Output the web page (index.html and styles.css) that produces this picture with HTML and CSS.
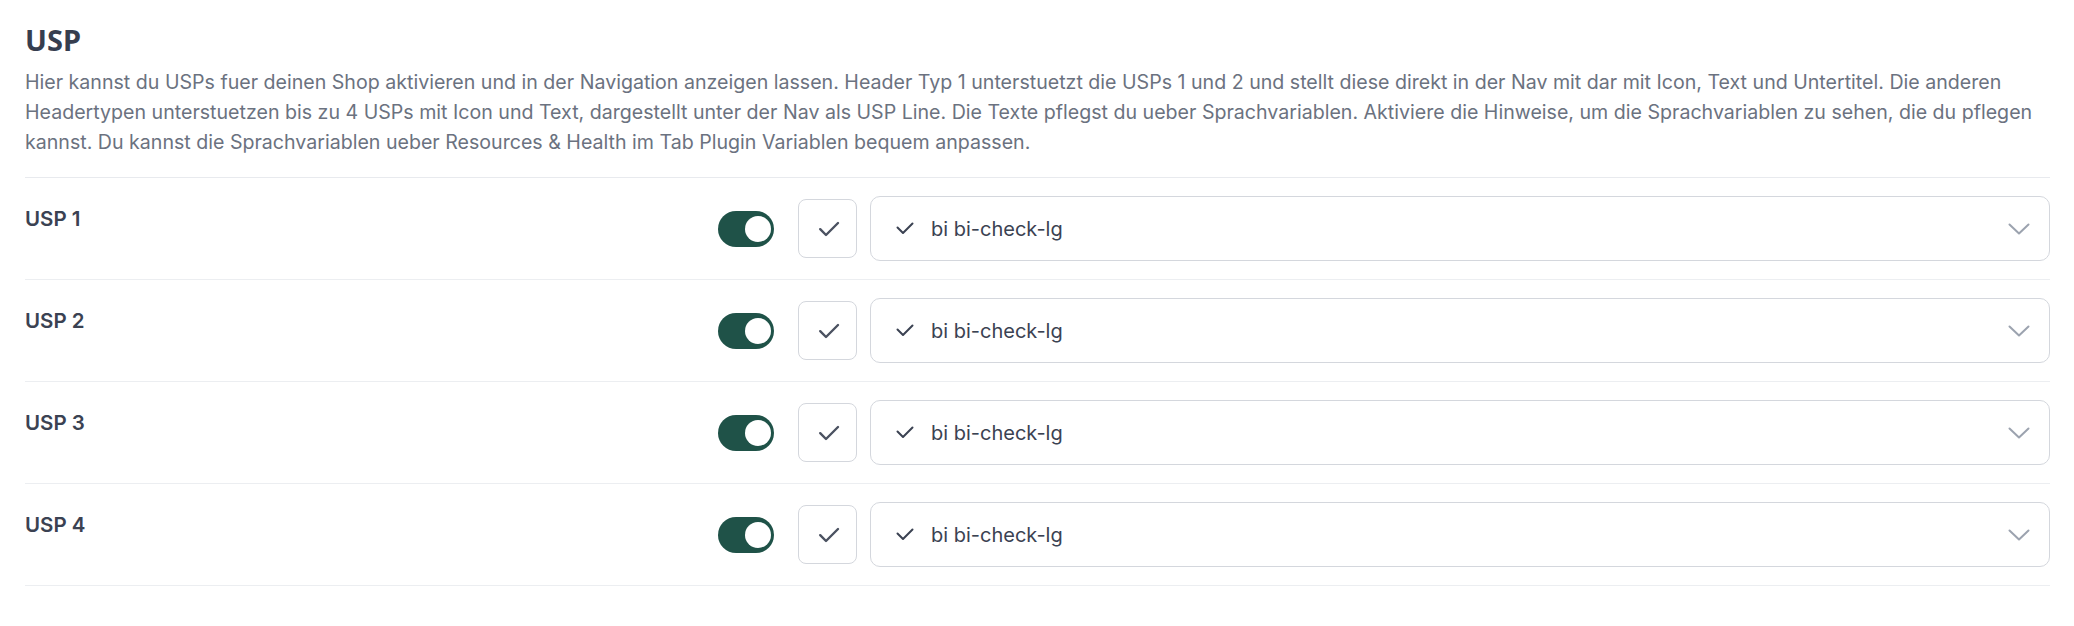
FILE: index.html
```html
<!DOCTYPE html>
<html lang="de">
<head>
<meta charset="utf-8">
<title>USP</title>
<link rel="stylesheet" href="styles.css">
</head>
<body>
<section class="settings">
  <header class="settings-head">
    <h2 class="settings-title">USP</h2>
    <p class="settings-desc">Hier kannst du USPs fuer deinen Shop aktivieren und in der Navigation anzeigen lassen. Header Typ 1 unterstuetzt die USPs 1 und 2 und stellt diese direkt in der Nav mit dar mit Icon, Text und Untertitel. Die anderen Headertypen unterstuetzen bis zu 4 USPs mit Icon und Text, dargestellt unter der Nav als USP Line. Die Texte pflegst du ueber Sprachvariablen. Aktiviere die Hinweise, um die Sprachvariablen zu sehen, die du pflegen kannst. Du kannst die Sprachvariablen ueber Resources &amp; Health im Tab Plugin Variablen bequem anpassen.</p>
  </header>

  <div class="rows">
    <div class="row">
      <div class="row-label">USP 1</div>
      <div class="row-controls">
        <span class="switch"><span class="knob"></span></span>
        <span class="icon-btn"><svg class="btn-check" viewBox="0 0 22 16"><path d="M2.2 8.2 L8 14 L20 2"/></svg></span>
        <div class="select">
          <svg class="opt-check" viewBox="0 0 18 13"><path d="M1.5 5.5 L7 11 L16.5 1.5"/></svg>
          <span class="select-text">bi bi-check-lg</span>
          <svg class="chevron" viewBox="0 0 22 12"><path d="M1.5 1.5 L11 10.5 L20.5 1.5"/></svg>
        </div>
      </div>
    </div>
    <div class="row">
      <div class="row-label">USP 2</div>
      <div class="row-controls">
        <span class="switch"><span class="knob"></span></span>
        <span class="icon-btn"><svg class="btn-check" viewBox="0 0 22 16"><path d="M2.2 8.2 L8 14 L20 2"/></svg></span>
        <div class="select">
          <svg class="opt-check" viewBox="0 0 18 13"><path d="M1.5 5.5 L7 11 L16.5 1.5"/></svg>
          <span class="select-text">bi bi-check-lg</span>
          <svg class="chevron" viewBox="0 0 22 12"><path d="M1.5 1.5 L11 10.5 L20.5 1.5"/></svg>
        </div>
      </div>
    </div>
    <div class="row">
      <div class="row-label">USP 3</div>
      <div class="row-controls">
        <span class="switch"><span class="knob"></span></span>
        <span class="icon-btn"><svg class="btn-check" viewBox="0 0 22 16"><path d="M2.2 8.2 L8 14 L20 2"/></svg></span>
        <div class="select">
          <svg class="opt-check" viewBox="0 0 18 13"><path d="M1.5 5.5 L7 11 L16.5 1.5"/></svg>
          <span class="select-text">bi bi-check-lg</span>
          <svg class="chevron" viewBox="0 0 22 12"><path d="M1.5 1.5 L11 10.5 L20.5 1.5"/></svg>
        </div>
      </div>
    </div>
    <div class="row">
      <div class="row-label">USP 4</div>
      <div class="row-controls">
        <span class="switch"><span class="knob"></span></span>
        <span class="icon-btn"><svg class="btn-check" viewBox="0 0 22 16"><path d="M2.2 8.2 L8 14 L20 2"/></svg></span>
        <div class="select">
          <svg class="opt-check" viewBox="0 0 18 13"><path d="M1.5 5.5 L7 11 L16.5 1.5"/></svg>
          <span class="select-text">bi bi-check-lg</span>
          <svg class="chevron" viewBox="0 0 22 12"><path d="M1.5 1.5 L11 10.5 L20.5 1.5"/></svg>
        </div>
      </div>
    </div>
  </div>
</section>
</body>
</html>
```

FILE: styles.css
```css
* { box-sizing: border-box; }

html, body {
  margin: 0;
  padding: 0;
  background: #ffffff;
}

body {
  font-family: Inter, "Liberation Sans", sans-serif;
  color: #374151;
}

.settings {
  padding: 22px 24px 0 25px;
}

.settings-title {
  margin: 0;
  font-family: "Noto Sans", "Open Sans", sans-serif;
  font-weight: 700;
  font-size: 29px;
  line-height: 36px;
  color: #363e4f;
}

.settings-desc {
  margin: 9px 0 20px 0;
  font-size: 19.6px;
  line-height: 30px;
  color: #6b7280;
}

.rows {
  border-top: 1px solid #e8eaee;
}

.row {
  display: flex;
  align-items: center;
  padding: 18px 0;
  border-bottom: 1px solid #eceef1;
}

.row-label {
  flex: 1 1 auto;
  align-self: flex-start;
  margin-top: 8px;
  font-size: 20.5px;
  line-height: 30px;
  font-weight: 600;
  color: #3b4252;
}

.row-controls {
  flex: 0 0 1332px;
  display: flex;
  align-items: center;
}

.switch {
  flex: 0 0 auto;
  width: 56px;
  height: 36px;
  border-radius: 18px;
  background: #1f5248;
  display: flex;
  align-items: center;
  justify-content: flex-end;
  padding-right: 3px;
  margin-right: 24px;
}

.knob {
  width: 26px;
  height: 26px;
  border-radius: 50%;
  background: #ffffff;
}

.icon-btn {
  flex: 0 0 auto;
  width: 59px;
  height: 59px;
  border: 1px solid #d4d7dd;
  border-radius: 8px;
  display: flex;
  align-items: center;
  justify-content: center;
  margin-right: 13px;
}

.btn-check {
  width: 22px;
  height: 16px;
  margin-left: 2px;
  fill: none;
  stroke: #4b5261;
  stroke-width: 2.4;
  stroke-linecap: round;
  stroke-linejoin: round;
}

.select {
  flex: 1 1 auto;
  height: 65px;
  border: 1px solid #d4d7dd;
  border-radius: 10px;
  display: flex;
  align-items: center;
  padding: 0 19px 0 25px;
}

.opt-check {
  width: 18px;
  height: 13px;
  margin-right: 17px;
  fill: none;
  stroke: #3b4252;
  stroke-width: 2;
  stroke-linecap: round;
  stroke-linejoin: round;
}

.select-text {
  flex: 1 1 auto;
  font-size: 20px;
  line-height: 30px;
  color: #3b4252;
}

.chevron {
  width: 22px;
  height: 12px;
  fill: none;
  stroke: #9ca3af;
  stroke-width: 2;
  stroke-linecap: round;
  stroke-linejoin: round;
}
```
